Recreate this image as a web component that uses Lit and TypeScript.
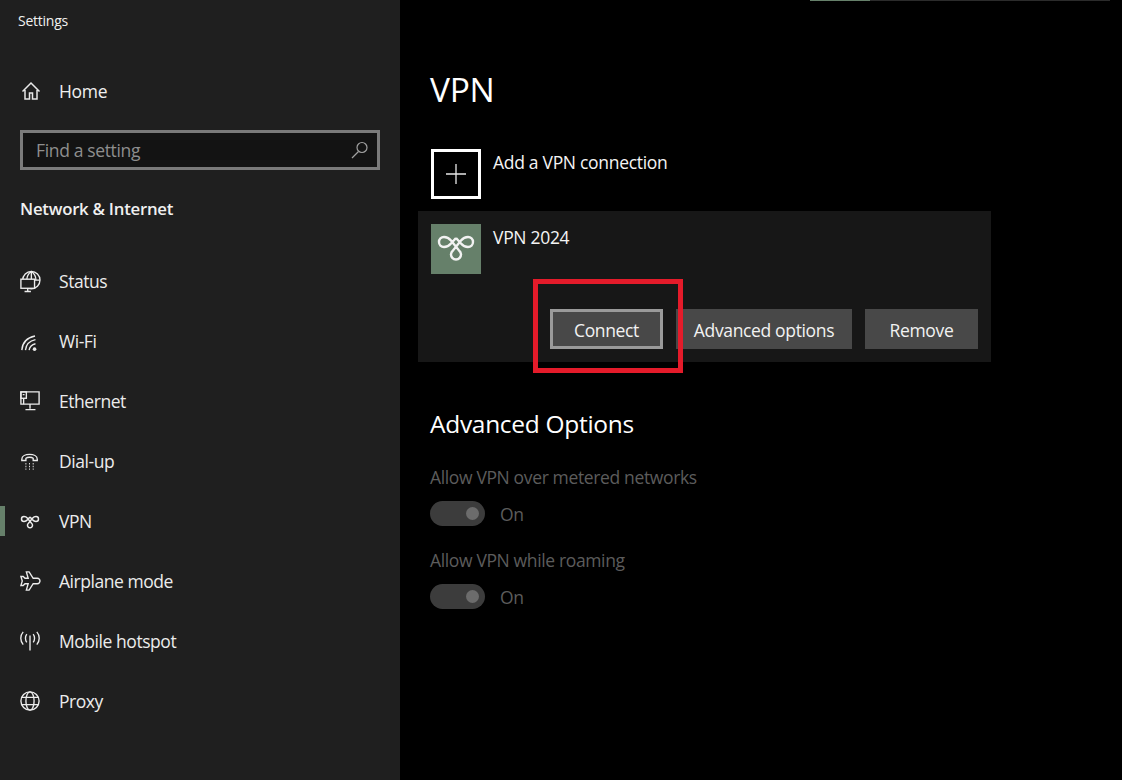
import { LitElement, html, css, svg } from "lit";
import { customElement } from "lit/decorators.js";

const vpnPath = svg`<path vector-effect="non-scaling-stroke" d="M25 14L20 19.5Q17 23 13 23A5 5 0 0 1 13 13Q17 13 20 16.5L28 26.5A5 5 0 1 1 22 26.5L30 16.5Q33 13 37 13A5 5 0 0 1 37 23Q33 23 30 19.5L25 14"/>`;

const icons: Record<string, any> = {
  status: svg`<circle cx="12.5" cy="10" r="9.5" /><path d="M3 10h19M12.5 .5v9.5M7.5 10c0-4 2-7.5 5-9.5 3 2 5 5.5 5 9.5"/><rect x="1" y="9" width="15" height="10" fill="#1f1f1f"/><path d="M8.5 19v3M5 22.5h7"/>`,
  wifi: svg`<path d="M2 21c.5-7 5-13.5 14.5-15.5M6 21c.5-5 4-10 11-11.5M10 21c.5-3 2.5-6 7-7"/><circle cx="16" cy="20" r="2" fill="#e8e8e8" stroke="none"/>`,
  eth: svg`<path d="M1 1h20v13.5H1zM11 14.5v5M6 20.5h11"/><rect x="1" y="1" width="6" height="7" /><path d="M3 4h2M4 8v6.5" />`,
  dial: svg`<path d="M2 9c0-7 17-7 17 0v1.5h-4.5V8c-2-1.5-6-1.500-8 0v2.5H2z"/><path d="M6 14h1M10 14h1M14 14h1M6 17h1M10 17h1M14 17h1M6 20h1M10 20h1M14 20h1"/>`,
  plane: svg`<path d="M7 1h3l4.5 7H19c2 0 3 2 3 3s-1 3-3 3h-4.500L10 21H7l2-7H5.5l-2 2H1l1.5-5L1 6h2.5l2 2H9L7 1z"/>`,
  hotspot: svg`<path d="M11 5v16.5"/><path d="M7.5 3.5c-2 2.500-2 6.500 0 9M14.5 3.500c2 2.500 2 6.500 0 9M3.500 1c-3.500 4-3.500 10 0 14M18.500 1c3.500 4 3.500 10 0 14"/>`,
  proxy: svg`<circle cx="11" cy="11" r="10"/><ellipse cx="11" cy="11" rx="4.500" ry="10"/><path d="M2 7h18M2 15h18"/>`,
};

const nav = [
  ["status", "Status"],
  ["wifi", "Wi-Fi"],
  ["eth", "Ethernet"],
  ["dial", "Dial-up"],
  ["vpn", "VPN"],
  ["plane", "Airplane mode"],
  ["hotspot", "Mobile hotspot"],
  ["proxy", "Proxy"],
];

@customElement("app-root")
export class AppRoot extends LitElement {
  static styles = css`
    :host {
      display: block;
      width: 1122px;
      height: 780px;
      overflow: hidden;
      font-family: "Open Sans", "Noto Sans", sans-serif;
      background: #000;
      color: #f0f0f0;
      position: relative;
    }
    .page { display: flex; height: 780px; }
    .side { width: 400px; flex: none; background: #1f1f1f; box-sizing: border-box; }
    .title { height: 40px; padding-left: 18px; display: flex; align-items: center; font-size: 14px; letter-spacing: -0.25px; }
    .home { height: 20px; margin-top: 41px; display: flex; align-items: center; padding-left: 21px; gap: 18px; font-size: 17.5px; letter-spacing: -0.3px; }
    .home svg { width: 20px; height: 20px; fill: none; stroke: #e8e8e8; stroke-width: 1.5; }
    .search {
      margin: 29px 20px 0; height: 40px; box-sizing: border-box; border: 3px solid #7a7a7a; background: #131313;
      display: flex; align-items: center; justify-content: space-between; padding: 0 8px 0 13px;
      font-size: 17.5px; letter-spacing: -0.35px; color: #8e8e8e;
    }
    .search svg { width: 18px; height: 18px; fill: none; stroke: #a0a0a0; stroke-width: 1.2; }
    .section { margin: 26px 0 0 20px; height: 24px; display: flex; align-items: center; font-size: 16.8px; font-weight: 600; letter-spacing: -0.25px; }
    .nav { margin-top: 31px; }
    .item { height: 60px; display: flex; align-items: center; padding-left: 20px; position: relative; font-size: 17.5px; letter-spacing: -0.45px; color: #ececec; }
    .item svg { width: 20px; height: 20px; flex: none; margin-right: 19px; fill: none; stroke: #ececec; stroke-width: 1.5; overflow: visible; }
    .item .bar { position: absolute; left: 0; top: 15px; width: 5px; height: 30px; background: #66806a; }
    main { flex: 1; padding: 0 0 0 18px; position: relative; }
    h1 { margin: 0; padding: 66px 0 0 12px; height: 149px; box-sizing: border-box; font-weight: 400; font-size: 33.5px; line-height: 46px; color: #fff; letter-spacing: -0.3px; }
    .add { display: flex; margin-left: 13px; gap: 12px; }
    .add-box { width: 50px; height: 50px; box-sizing: border-box; border: 3px solid #fff; display: flex; align-items: center; justify-content: center; }
    .add-box svg { width: 20px; height: 20px; stroke: #e8e8e8; stroke-width: 1.3; fill: none; }
    .rowtext { font-size: 17.5px; letter-spacing: -0.3px; line-height: 26px; color: #f4f4f4; }
    .card { width: 573px; height: 151px; margin-top: 12px; background: #171717; box-sizing: border-box; padding: 13px; }
    .card-top { display: flex; gap: 12px; height: 50px; }
    .logo { width: 50px; height: 50px; background: #66806a; display: flex; }
    .logo svg { width: 50px; height: 50px; fill: none; stroke: #f2f2f2; stroke-width: 2.4; }
    .btns { display: flex; justify-content: flex-end; gap: 13px; margin-top: 35px; }
    .btn { height: 40px; box-sizing: border-box; padding-top: 1px; background: #484848; display: flex; align-items: center; justify-content: center; font-size: 17.5px; letter-spacing: -0.35px; color: #f2f2f2; }
    .btn.focus { width: 113px; border: 3px solid #9a9a9a; }
    .btn.adv { width: 176px; }
    .btn.rem { width: 113px; }
    .mark { position: absolute; left: 133px; top: 279px; width: 150px; height: 94px; box-sizing: border-box; border: 5px solid #e41b2a; }
    h2 { margin: 44px 0 0 12px; font-weight: 400; font-size: 24.5px; line-height: 36px; letter-spacing: -0.3px; color: #fff; }
    .label { margin: 22px 0 0 12px; font-size: 17.5px; line-height: 26px; letter-spacing: -0.36px; color: #5c5c5c; }
    .label.next { margin-top: 21px; }
    .toggle-row { display: flex; align-items: center; gap: 15px; margin: 11px 0 0 12px; height: 25px; font-size: 17.5px; letter-spacing: -0.3px; color: #5c5c5c; }
    .toggle { width: 55px; height: 25px; border-radius: 13px; background: #3c3c3c; position: relative; }
    .toggle i { position: absolute; right: 6px; top: 6px; width: 13px; height: 13px; border-radius: 50%; background: #6c6c6c; }
    .progress { position: absolute; top: 0; left: 410px; width: 300px; height: 1px; display: flex; }
    .progress .a { width: 60px; background: #66806a; }
    .progress .b { flex: 1; background: #2b2b2b; }
  `;

  render() {
    return html`
      <div class="page">
        <aside class="side">
          <div class="title">Settings</div>
          <div class="home">
            <svg viewBox="0 0 20 20"><path d="M1.5 10.5L10 2l8.5 8.5M4 9v9h4.5v-6h3v6H16V9"/></svg>
            <span>Home</span>
          </div>
          <div class="search">
            <span>Find a setting</span>
            <svg viewBox="0 0 18 18"><circle cx="11" cy="6.5" r="5"/><path d="M7.5 10.500L1 17"/></svg>
          </div>
          <div class="section">Network &amp; Internet</div>
          <nav class="nav">
            ${nav.map(
              ([k, t]) => html`<div class="item">
                ${k === "vpn" ? html`<span class="bar"></span>` : ""}
                ${k === "vpn"
                  ? html`<svg viewBox="5 2 40 40">${vpnPath}</svg>`
                  : html`<svg viewBox="0 0 22 22">${icons[k]}</svg>`}
                <span>${t}</span>
              </div>`
            )}
          </nav>
        </aside>
        <main>
          <div class="progress"><span class="a"></span><span class="b"></span></div>
          <h1>VPN</h1>
          <div class="add">
            <div class="add-box"><svg viewBox="0 0 20 20"><path d="M10 0v20M0 10h20"/></svg></div>
            <div class="rowtext">Add a VPN connection</div>
          </div>
          <div class="card">
            <div class="card-top">
              <div class="logo"><svg viewBox="0 0 50 50">${vpnPath}</svg></div>
              <div class="rowtext">VPN 2024</div>
            </div>
            <div class="btns">
              <div class="btn focus">Connect</div>
              <div class="btn adv">Advanced options</div>
              <div class="btn rem">Remove</div>
            </div>
          </div>
          <h2>Advanced Options</h2>
          <div class="label">Allow VPN over metered networks</div>
          <div class="toggle-row"><span class="toggle"><i></i></span><span>On</span></div>
          <div class="label next">Allow VPN while roaming</div>
          <div class="toggle-row"><span class="toggle"><i></i></span><span>On</span></div>
          <div class="mark"></div>
        </main>
      </div>
    `;
  }
}
